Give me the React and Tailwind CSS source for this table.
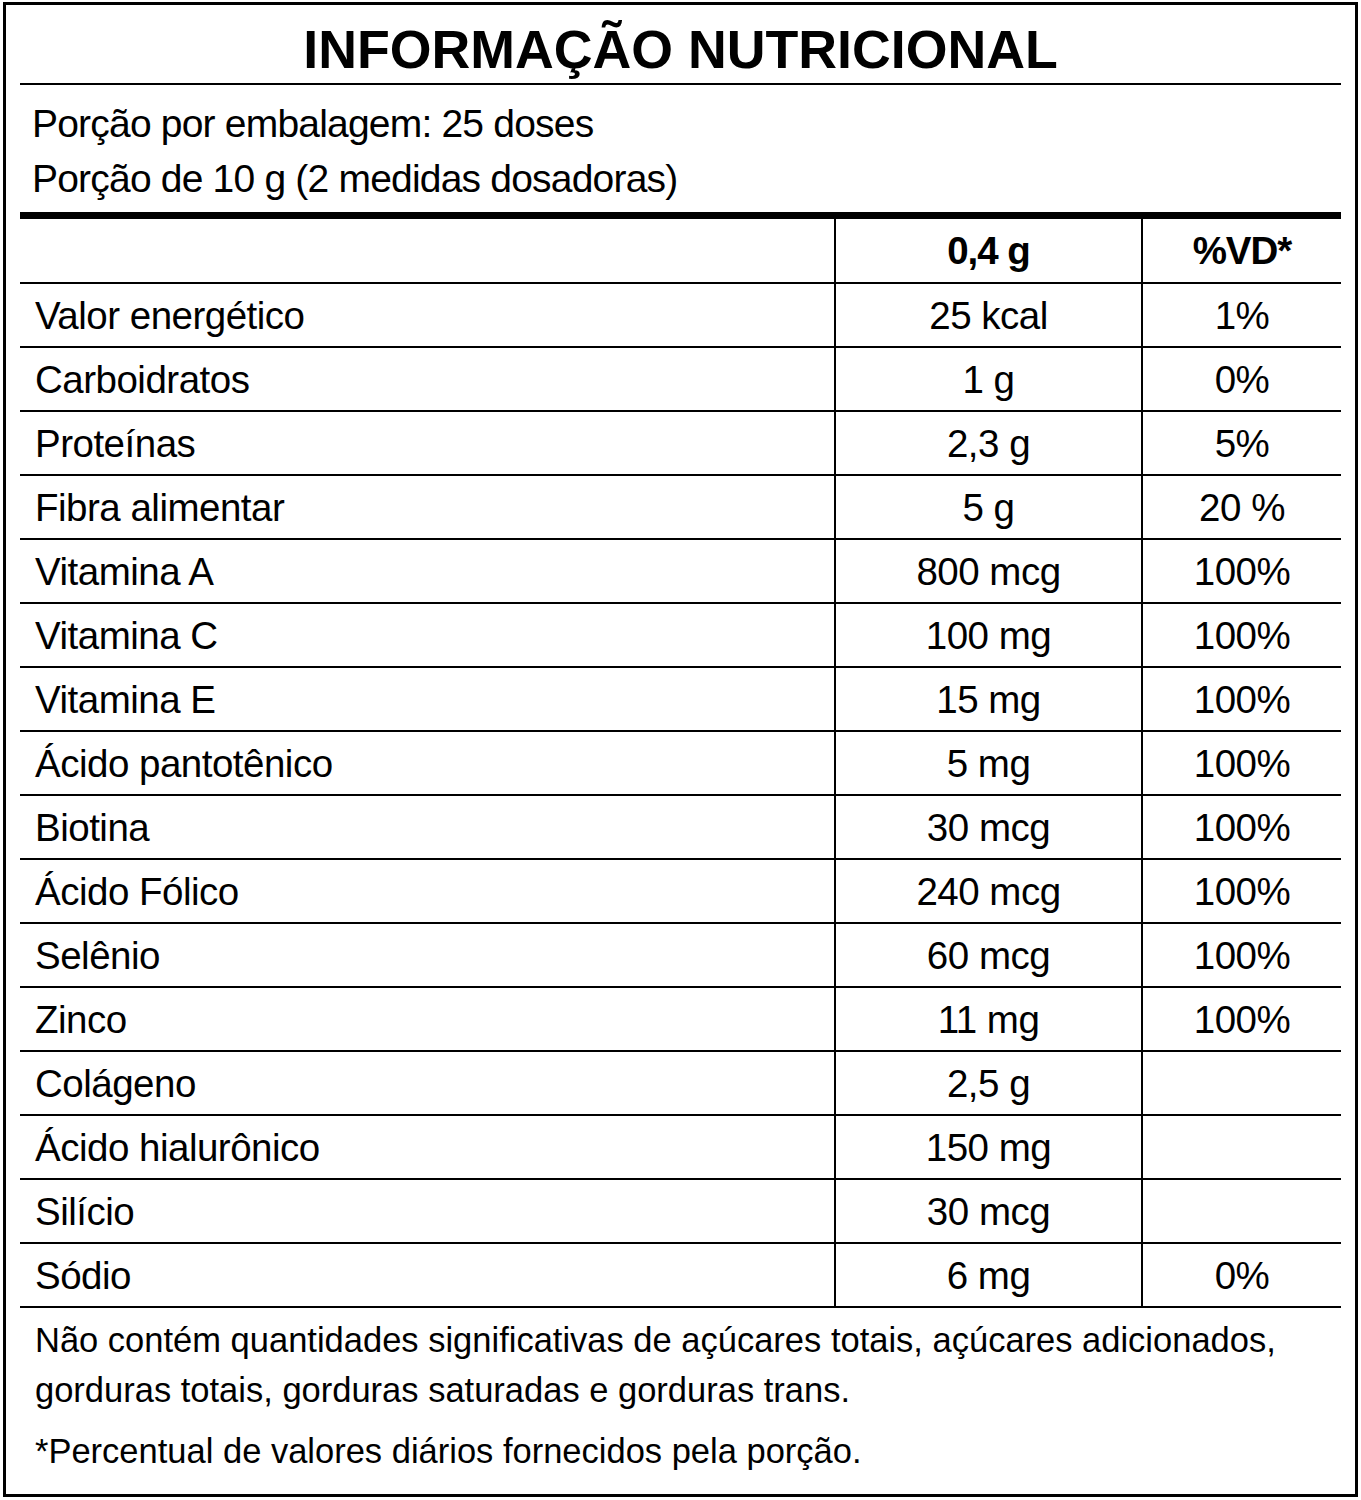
const rows = [
  ['Valor energético', '25 kcal', '1%'],
  ['Carboidratos', '1 g', '0%'],
  ['Proteínas', '2,3 g', '5%'],
  ['Fibra alimentar', '5 g', '20 %'],
  ['Vitamina A', '800 mcg', '100%'],
  ['Vitamina C', '100 mg', '100%'],
  ['Vitamina E', '15 mg', '100%'],
  ['Ácido pantotênico', '5 mg', '100%'],
  ['Biotina', '30 mcg', '100%'],
  ['Ácido Fólico', '240 mcg', '100%'],
  ['Selênio', '60 mcg', '100%'],
  ['Zinco', '11 mg', '100%'],
  ['Colágeno', '2,5 g', ''],
  ['Ácido hialurônico', '150 mg', ''],
  ['Silício', '30 mcg', ''],
  ['Sódio', '6 mg', '0%'],
];

export default function App() {
  return (
    <div className="bg-white pt-[2px] pl-[3px] font-['Liberation_Sans',Arial,sans-serif] text-black">
      <div className="w-[1355px] h-[1495px] border-[3px] border-black px-[14px]">
        {/* Title */}
        <div className="h-[78px] pt-[18px] text-center text-[53.7px] leading-[53px] font-bold">
          INFORMAÇÃO NUTRICIONAL
        </div>
        <div className="h-[2px] bg-black" />

        {/* Portion */}
        <div className="pt-[11px] pb-[6px] pl-[12px] text-[39px] leading-[55px] tracking-[-0.8px]">
          <p>Porção por embalagem: 25 doses</p>
          <p>Porção de 10 g (2 medidas dosadoras)</p>
        </div>
        <div className="h-[7px] bg-black" />

        {/* Table */}
        <div className="text-[38.5px] tracking-[-0.5px]">
          <div className="flex h-[65px] border-b-2 border-black font-bold leading-[63px] tracking-[-1px]">
            <div className="w-[814px]" />
            <div className="w-[307px] border-l-2 border-black text-center">0,4 g</div>
            <div className="flex-1 border-l-2 border-black text-center">%VD*</div>
          </div>
          {rows.map((r) => (
            <div key={r[0]} className="flex h-[64px] border-b-2 border-black leading-[62px]">
              <div className="w-[814px] pl-[15px] pt-px">{r[0]}</div>
              <div className="w-[307px] border-l-2 border-black text-center pt-px">{r[1]}</div>
              <div className="flex-1 border-l-2 border-black text-center pt-px">{r[2]}</div>
            </div>
          ))}
        </div>

        {/* Footnotes */}
        <div className="pt-[7px] pl-[15px] text-[34.5px] leading-[50px]">
          <p>
            Não contém quantidades significativas de açúcares totais, açúcares adicionados,
            <br />
            gorduras totais, gorduras saturadas e gorduras trans.
          </p>
          <p className="mt-[11px]">*Percentual de valores diários fornecidos pela porção.</p>
        </div>
      </div>
    </div>
  );
}
